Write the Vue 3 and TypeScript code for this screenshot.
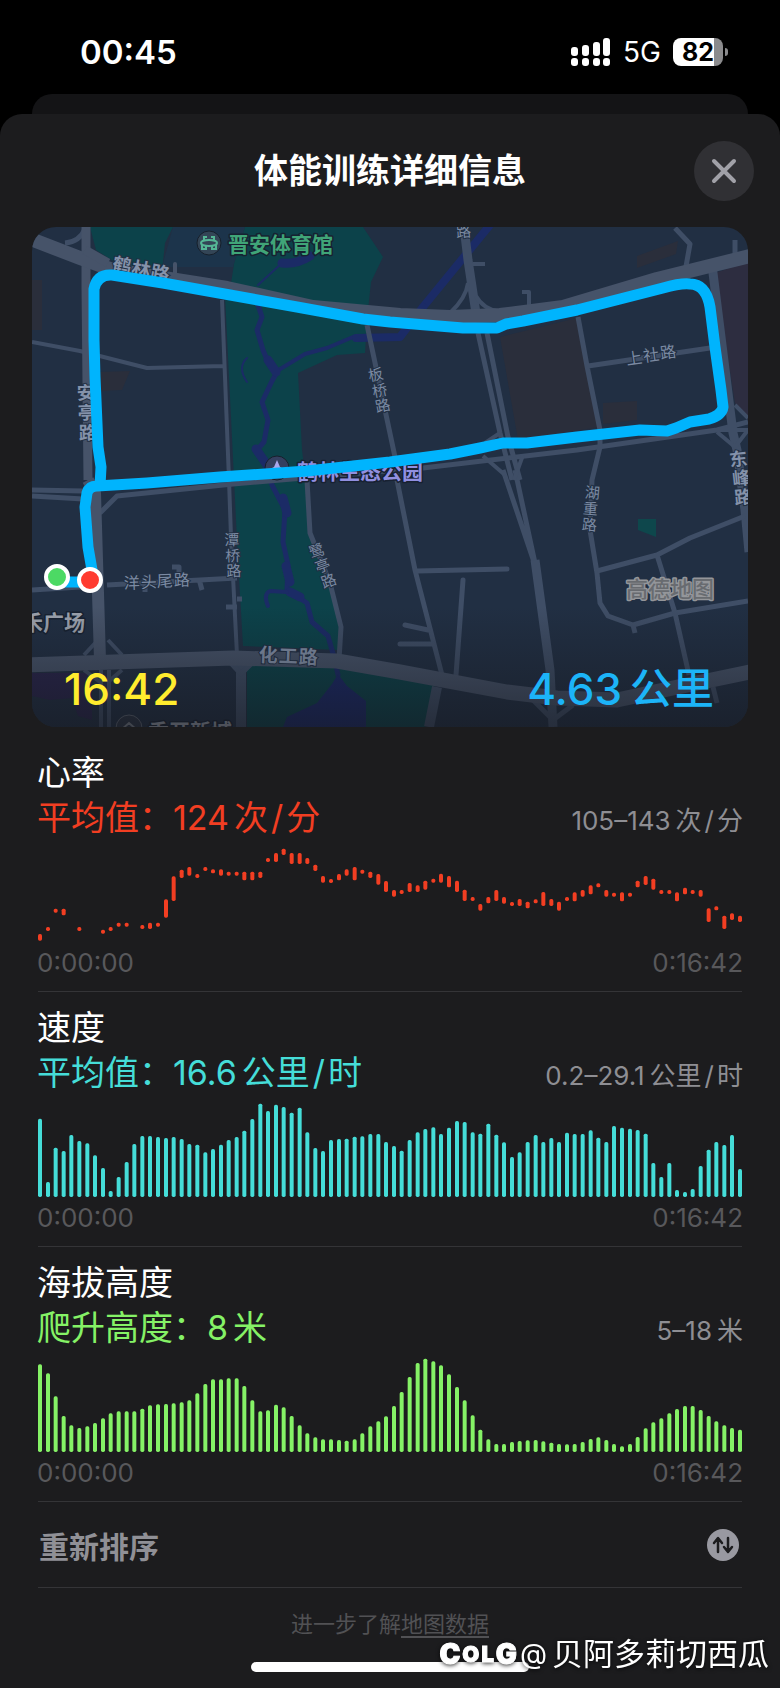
<script setup lang="ts">
interface Bar { x: number; y: number; h: number }
interface Metric {
  id: string
  title: string
  label: string
  value: string
  units: string[]
  range: string
  bars: Bar[]
}
interface RoadLabel { text: string; size: number; x: string; y: string; rotate: number; major?: boolean }

const CHART_W = 2112
const CHART_H = 294
const BAR_W = 12
const COUNT = 90

const barX = (i: number): number => Math.round((i * (CHART_W - BAR_W)) / (COUNT - 1))

// [index, top, bottom]; a missing bottom is a single reading
const heartReadings: number[][] = [
  [0, 267, 287], [1, 246], [2, 191], [3, 191, 211], [5, 246], [8, 254], [9, 246], [10, 233], [11, 233],
  [13, 240], [14, 233, 252], [15, 233], [16, 163, 218], [17, 94, 168], [18, 74, 99], [19, 66, 92], [20, 87],
  [21, 66], [22, 73], [23, 73, 92], [24, 80], [25, 80], [26, 80, 106], [27, 80, 106], [28, 80, 99], [29, 39],
  [30, 24, 51], [31, 11, 30], [32, 24, 57], [33, 24, 57], [34, 39, 57], [35, 59, 78], [36, 93, 113], [37, 102],
  [38, 87, 106], [39, 73, 92], [40, 66, 106], [41, 74], [42, 80, 99], [43, 87, 119], [44, 108, 141],
  [45, 135, 155], [46, 135], [47, 114, 141], [48, 121, 141], [49, 107, 134], [50, 101], [51, 86, 113],
  [52, 93, 127], [53, 107, 141], [54, 134, 168], [55, 156], [56, 177, 197], [57, 156, 175], [58, 135, 168],
  [59, 156, 176], [60, 171], [61, 162, 183], [62, 170, 190], [63, 163], [64, 141, 183], [65, 162, 183],
  [66, 170, 197], [67, 156], [68, 142, 169], [69, 135, 155], [70, 121, 148], [71, 115], [72, 135, 155],
  [73, 143], [74, 142, 169], [75, 143], [76, 107, 127], [77, 93, 120], [78, 101, 134], [79, 135], [80, 135],
  [81, 142, 169], [82, 128, 148], [83, 135], [84, 135, 155], [85, 190, 231], [86, 184], [87, 212, 252],
  [88, 205, 225], [89, 212, 231],
]

const speedTops: number[] = [
  56, 246, 143, 153, 105, 123, 130, 166, 204, 273, 231, 186, 132, 108, 108, 111, 114, 111, 117, 132, 134, 157,
  147, 134, 120, 111, 92, 57, 11, 33, 14, 21, 38, 23, 97, 144, 153, 120, 117, 116, 110, 109, 102, 102, 126, 138,
  152, 120, 97, 87, 82, 102, 83, 63, 66, 97, 101, 71, 104, 127, 171, 157, 126, 105, 126, 114, 126, 98, 102, 102,
  91, 113, 126, 78, 83, 86, 90, 101, 189, 231, 189, 270, 276, 267, 198, 149, 126, 135, 105, 207,
]

const altitudeTops: number[] = [
  28, 55, 124, 183, 211, 219, 214, 204, 190, 175, 169, 169, 169, 161, 151, 148, 147, 145, 142, 136, 115, 87, 73,
  73, 70, 70, 93, 136, 169, 166, 149, 157, 183, 211, 235, 247, 253, 253, 255, 257, 253, 235, 214, 199, 184, 153,
  111, 66, 24, 11, 19, 31, 58, 96, 136, 181, 224, 253, 267, 267, 261, 258, 256, 255, 259, 263, 267, 268, 267,
  261, 252, 247, 255, 267, 274, 267, 246, 220, 202, 190, 175, 162, 153, 153, 165, 183, 199, 211, 219, 224,
]

const fromTops = (tops: number[]): Bar[] =>
  tops.map((top, i) => ({ x: barX(i), y: top, h: CHART_H - 3 - top }))

const metrics: Metric[] = [
  {
    id: 'heart', title: '心率', label: '平均值：', value: '124', units: ['次', '分'], range: '105–143',
    bars: heartReadings.map(([i, top, bottom]) => ({ x: barX(i), y: top, h: (bottom ?? top + BAR_W) - top })),
  },
  {
    id: 'speed', title: '速度', label: '平均值：', value: '16.6', units: ['公里', '时'], range: '0.2–29.1',
    bars: fromTops(speedTops),
  },
  {
    id: 'altitude', title: '海拔高度', label: '爬升高度：', value: '8', units: ['米'], range: '5–18',
    bars: fromTops(altitudeTops),
  },
]

const roadLabels: RoadLabel[] = [
  { text: '鹤林路', size: 19, x: '121 140 159', y: '264 268 272', rotate: 10, major: true },
  { text: '安亭路', size: 18, x: '86 87 88', y: '393 413 433', rotate: -2, major: true },
  { text: '板桥路', size: 15, x: '377 381 384', y: '376 392 407', rotate: -12 },
  { text: '潭桥路', size: 15, x: '232 233 234', y: '540 556 571', rotate: -2 },
  { text: '鹭亭路', size: 15, x: '319 325 331', y: '553 568 583', rotate: -20 },
  { text: '湖重路', size: 15, x: '592 590 589', y: '492 508 524', rotate: 5 },
  { text: '洋头尾路', size: 16, x: '132 149 165 182', y: '583 582 581 580', rotate: -2 },
  { text: '上社路', size: 16, x: '635 652 669', y: '359 356 353', rotate: -8 },
  { text: '化工路', size: 19, x: '268 288 308', y: '655 656 657', rotate: 2, major: true },
  { text: '东峰路', size: 18, x: '739 742 744', y: '460 479 498', rotate: -6, major: true },
  { text: '路', size: 15, x: '464', y: '232', rotate: -4 },
]
</script>

<template>
  <div class="screen">
    <header class="status">
      <time class="clock">00:45</time>
      <div class="indicators">
        <svg class="signal" width="40" height="28" viewBox="0 0 40 28" aria-label="信号">
          <g fill="#fff">
            <rect x="0" y="9" width="7" height="9" rx="3" /><rect x="11" y="7" width="7" height="11" rx="3" />
            <rect x="22" y="4" width="7" height="14" rx="3" /><rect x="32" y="0" width="7" height="18" rx="3" />
            <rect x="0" y="20" width="7" height="8" rx="3" /><rect x="11" y="20" width="7" height="8" rx="3" />
            <rect x="22" y="20" width="7" height="8" rx="3" /><rect x="32" y="20" width="7" height="8" rx="3" />
          </g>
        </svg>
        <span class="network">5G</span>
        <span class="battery"><span class="level">82</span></span>
      </div>
    </header>

    <div class="back-sheet"></div>

    <main class="sheet">
      <div class="title-bar">
        <h1>体能训练详细信息</h1>
        <button class="close" type="button" aria-label="关闭">
          <svg width="26" height="26" viewBox="0 0 26 26">
            <path d="M3 3 23 23M23 3 3 23" fill="none" stroke="#a1a1a8" stroke-width="4" stroke-linecap="round" />
          </svg>
        </button>
      </div>

      <section class="map" aria-label="路线">
        <svg class="map-canvas" viewBox="32 227 716 500">
          <defs>
            <linearGradient id="shade" x1="0" y1="0" x2="0" y2="1">
              <stop offset="0" stop-color="#16181f" stop-opacity="0" />
              <stop offset="1" stop-color="#16181f" stop-opacity="0.6" />
            </linearGradient>
          </defs>
          <rect x="32" y="227" width="716" height="500" fill="#212f43" />

          <g fill="#2a2e3b">
            <path d="M500 337 577 318 600 427 518 440Z" />
            <path d="M715 273 748 262V420L735 403Z" fill="#2d2d40" />
            <path d="M637 256 678 241 676 254 637 268ZM603 403 637 401V420L603 424ZM100 372 130 371 122 390 100 391Z" />
            <path d="M32 280H42V330H32Z" />
            <path d="M32 673H92V720L78 716 72 698 50 700 32 696Z" fill="#29254c" />
          </g>
          <path d="M173 227H245L233 267H162Z" fill="#1c344b" />
          <g fill="#0c424a">
            <path d="M90 227H173L165 243 162 272 115 262 96 250Z" />
            <path d="M245 227H363L383 257 371 282 368 310 300 305 230 290 234 264Z" />
            <path d="M225 295 300 305 367 320 365 353 337 355 298 373 302 450 306 482 311 536 334 593 341 627 338 650 243 646 238 560Z" />
            <path d="M247 664H340L435 685 425 727H247Z" />
            <path d="M638 519H656V537L638 530Z" fill="#0e474c" />
          </g>

          <g fill="none" stroke="#1b2b66" stroke-linecap="round" stroke-linejoin="round">
            <path d="M353 337 327 348 305 354 277 371" stroke-width="4" />
            <path d="M490 225 423 307" stroke-width="8" />
            <path d="M423 307 400 337 356 338" stroke-width="8" />
            <path d="M258 285 282 263" stroke-width="2" />
            <path d="M282 263Q296 265 310 256" stroke-width="9" />
            <path d="M258 305 262 317 257 330 263 350 268 362 277 372 272 381 262 402 268 420 264 442 257 450 266 468 272 485 285 510 283 542 288 565 287 590 307 603 312 622 328 636 334 657 338 675" stroke-width="5" />
            <path d="M268 360 276 372M283 498 287 513M286 566 290 582M256 449 265 462M290 592 300 597" stroke-width="9" />
            <path d="M287 592 270 591Q263 594 268 606" stroke-width="4" />
            <path d="M247 358Q237 367 247 382" stroke-width="2" />
          </g>
          <path d="M338 674 347 686 366 701V727H283L287 717 317 703 332 684Z" fill="#1a2867" />

          <g fill="none" stroke="#3f4e66" stroke-linejoin="round">
            <path d="M32 342 80 351 147 368 223 366M222 300 229 480 231 537 237 655" stroke-width="4" />
            <path d="M65 243Q80 242 86 227" stroke-width="5" />
            <path d="M32 490 83 491M32 496 83 499M100 513 117 496 233 484 423 468 577 450 717 430 748 422" stroke-width="5" />
            <path d="M32 590 80 587M107 585 237 578M172 567 179 567V577M199 579 202 590M145 585V592M226 607H237M237 599H242" stroke-width="5" />
            <path d="M367 325 395 457 397 480 415 570 442 675M307 480 310 533 330 583 341 627 339 660" stroke-width="5" />
            <path d="M478 333 500 433 512 480M487 333 508 437 520 480M503 470 534 562M515 470 535 563" stroke-width="5" />
            <path d="M535 560 550 670 553 727" stroke-width="9" />
            <path d="M464 227 468 260 477 320" stroke-width="9" />
            <path d="M468 283Q466 298 450 313M476 296Q483 309 500 312M473 264H485M522 292H529V309" stroke-width="4" />
            <path d="M500 433 485 443M483 456 505 475M523 455 514 480" stroke-width="4" />
            <path d="M675 228 690 244 685 272M735 240V260" stroke-width="5" />
            <path d="M712 265 733 433 737 450 745 510 749 552" stroke-width="9" />
            <path d="M735 405 748 418M717 432 735 447 748 430M720 430H748" stroke-width="4" />
            <path d="M578 317 587 366 600 430V447L592 480 590 530 597 573 600 603 608 616 633 625 675 613 748 601M633 625 635 633M588 366 710 348" stroke-width="5" />
            <path d="M597 571 657 555 690 538 745 516M657 555 675 613 689 675M713 687 717 703" stroke-width="5" />
            <path d="M417 571 507 569M463 580 456 675M405 625 428 630M400 644H433" stroke-width="5" stroke-linecap="round" />
            <path d="M437 687 429 727M241 665V727" stroke-width="10" />
            <path d="M230 662 241 674 253 662M533 700 553 720 573 705" stroke-width="5" />
            <path d="M84 655 98 640M108 640 122 655M84 670 100 682M122 670 108 682M101 670V727M109 670V727" stroke-width="4" />
          </g>
          <g fill="none" stroke="#465369" stroke-linejoin="round">
            <path d="M86 227 86 287 88 480" stroke-width="9" />
            <path d="M88 480 95 493 100 660" stroke-width="12" />
            <path d="M28 238 80 258 113 270 227 288 313 307 400 315 450 317 500 315 563 307 657 279 750 256" stroke-width="14" />
            <path d="M85 250 108 263" stroke-width="9" />
            <path d="M175 264V280" stroke-width="4" stroke-linecap="round" />
            <path d="M28 665 233 658 337 661 400 672 507 692 557 698 617 700 673 688 750 672" stroke-width="15" />
          </g>

          <circle cx="209" cy="243" r="12" fill="#334556" stroke="#17202c" />
          <g fill="none" stroke="#54b695" stroke-width="2">
            <ellipse cx="209" cy="243" rx="8" ry="3" />
            <path d="M202 244V249H206V246M216 244V249H212V246M204 240V237H207M214 240V237H211" />
          </g>
          <text class="poi stadium" x="228" y="252" font-size="21">晋安体育馆</text>
          <circle cx="277" cy="468" r="12" fill="#343f5f" stroke="#17202c" />
          <path d="M277 460 280 467 286 470 280 472 277 478 274 472 268 470 274 467Z" fill="#a8a7ec" />
          <text class="poi park" x="297" y="479" font-size="21">鹤林生态公园</text>
          <text class="poi plaza" x="22" y="630" font-size="21">禾广场</text>
          <circle cx="129" cy="728" r="13" fill="#2b3444" stroke="#606875" />
          <path d="M121 730 129 723 137 730M124 729V738H134V729" fill="none" stroke="#7d838d" stroke-width="2" />
          <text class="poi plaza" x="148" y="739" font-size="21">香开新城</text>
          <text
            v-for="road in roadLabels"
            :key="road.text + road.x"
            class="road"
            :class="{ major: road.major }"
            :font-size="road.size"
            :x="road.x"
            :y="road.y"
            :rotate="road.rotate"
            dominant-baseline="central"
            text-anchor="middle"
          >{{ road.text }}</text>
          <text class="provider" x="626" y="597" font-size="22">高德地图</text>

          <rect x="32" y="607" width="716" height="120" fill="url(#shade)" />

          <path
            d="M57 582H90L92 570 88 547 85 507 87 493Q89 486 97 486L147 483 220 477 307 471 390 462 450 454 480 448 503 443 527 443 577 437 640 430 667 431 676 428 690 422 709 419Q722 415 723 407L721 390 715 347 710 307Q706 284 690 284 681 283 663 288L577 310 523 321 506 324 497 328 463 328 390 322 363 319 297 307 163 283 112 275Q97 274 94 289L94 340 95 377 98 447 101 467 100 486"
            fill="none" stroke="#00b4fd" stroke-width="11" stroke-linejoin="round" stroke-linecap="round"
          />
          <circle cx="57" cy="577" r="11" fill="#4cd964" stroke="#fff" stroke-width="4" />
          <circle cx="90" cy="580" r="11" fill="#ff3b30" stroke="#fff" stroke-width="4" />
        </svg>
        <div class="map-stats">
          <span class="duration">16:42</span>
          <span class="distance"><span>4.63</span><span class="unit">公里</span></span>
        </div>
      </section>

      <section v-for="metric in metrics" :key="metric.id" class="metric" :class="metric.id">
        <h2>{{ metric.title }}</h2>
        <div class="summary">
          <p class="average">
            {{ metric.label }}<span class="number">{{ metric.value }}</span><template v-for="(unit, i) in metric.units" :key="unit"><span v-if="i" class="slash">/</span>{{ unit }}</template>
          </p>
          <p class="range">
            <span class="number">{{ metric.range }}</span><template v-for="(unit, i) in metric.units" :key="unit"><span v-if="i" class="slash">/</span>{{ unit }}</template>
          </p>
        </div>
        <svg class="chart" :viewBox="`0 0 ${CHART_W} ${CHART_H}`" role="img" :aria-label="metric.title">
          <rect v-for="bar in metric.bars" :key="bar.x" :x="bar.x" :y="bar.y" :width="BAR_W" :height="bar.h" rx="5" />
        </svg>
        <div class="times"><time>0:00:00</time><time>0:16:42</time></div>
      </section>

      <button class="reorder" type="button">
        <span>重新排序</span>
        <svg width="32" height="32" viewBox="0 0 32 32">
          <circle cx="16" cy="16" r="16" fill="#9999a1" />
          <path d="M11 23V10M7 14 11 9 15 14M21 9V22M17 18 21 23 25 18" fill="none" stroke="#1c1c1e" stroke-width="2.5" stroke-linecap="round" stroke-linejoin="round" />
        </svg>
      </button>

      <p class="more">进一步了解<a href="#">地图数据</a></p>
    </main>

    <div class="home-bar"></div>
    <div class="watermark">
      <span class="brand"><span>C</span><span class="small">O</span><span class="small">L</span><span>G</span></span>
      <span class="at">@</span><span>贝阿多莉切西瓜</span>
    </div>
  </div>
</template>

<style>
body {
  margin: 0;
  background: #000;
}
</style>

<style scoped>
.screen {
  position: relative;
  min-height: 100vh;
  display: flex;
  flex-direction: column;
  background: #000;
  color: #fff;
  font-family: Inter, "Noto Sans CJK SC", sans-serif;
  overflow: hidden;
}

h1, h2, p {
  margin: 0;
  font-weight: 400;
}

button {
  font: inherit;
  border: 0;
  padding: 0;
  cursor: pointer;
}

.status {
  height: 94px;
  box-sizing: border-box;
  padding: 10px 57px 0 80px;
  display: flex;
  justify-content: space-between;
  align-items: center;
}

.clock {
  font-size: 33px;
  line-height: 40px;
  font-weight: 600;
}

.indicators {
  display: flex;
  align-items: center;
  gap: 12px;
}

.network {
  font-size: 28px;
  line-height: 30px;
}

.battery {
  position: relative;
  width: 50px;
  height: 28px;
  border-radius: 8px;
  background: linear-gradient(to right, #fff 82%, #8b8b8d 82%);
  color: #000;
  text-align: center;
}

.battery::after {
  content: "";
  position: absolute;
  right: -5px;
  top: 10px;
  width: 3px;
  height: 8px;
  border-radius: 0 3px 3px 0;
  background: #8b8b8d;
}

.level {
  display: block;
  font-size: 25px;
  line-height: 28px;
  font-weight: 700;
}

.back-sheet {
  height: 40px;
  margin: 0 32px -20px;
  border-radius: 20px 20px 0 0;
  background: #141416;
}

.sheet {
  position: relative;
  flex: 1;
  border-radius: 22px 22px 0 0;
  background: #1c1c1e;
}

.title-bar {
  height: 113px;
  padding: 0 26px;
  display: grid;
  grid-template-columns: 60px 1fr 60px;
  align-items: center;
}

.title-bar h1 {
  grid-column: 2;
  text-align: center;
  font-size: 34px;
  line-height: 44px;
  font-weight: 600;
}

.close {
  width: 60px;
  height: 60px;
  border-radius: 50%;
  background: #303034;
  display: grid;
  place-items: center;
}

.map {
  position: relative;
  margin: 0 32px 10px;
  border-radius: 24px;
  overflow: hidden;
}

.map-canvas {
  display: block;
  width: 100%;
  height: auto;
}

.map-stats {
  position: absolute;
  left: 32px;
  right: 34px;
  bottom: 8px;
  display: flex;
  justify-content: space-between;
  align-items: baseline;
  font-size: 44px;
  line-height: 60px;
  font-weight: 500;
}

.duration {
  color: #ffec2e;
}

.distance {
  display: flex;
  gap: 8px;
  color: #1cb4f8;
}

.unit {
  font-size: 42px;
}

.poi {
  font-weight: 700;
  paint-order: stroke;
  stroke: #172131;
  stroke-width: 3px;
  stroke-linejoin: round;
}

.stadium {
  fill: #40a578;
}

.park {
  fill: #918fe0;
}

.plaza {
  fill: #9ca2ad;
}

.road {
  fill: #7b8aa2;
  paint-order: stroke;
  stroke: #212f43;
  stroke-width: 2px;
}

.major {
  fill: #8492aa;
  font-weight: 700;
}

.provider {
  font-weight: 500;
  fill: #686b70;
  stroke: #94969a;
  stroke-width: 3px;
  stroke-linejoin: round;
  paint-order: stroke;
}

.metric {
  margin: 0 38px;
  padding: 14px 0 12px;
  border-bottom: 1px solid #343437;
}

.metric h2,
.summary,
.times {
  margin: 0 -1px;
}

.metric h2 {
  font-size: 34px;
  line-height: 44px;
}

.summary {
  display: flex;
  justify-content: space-between;
  align-items: baseline;
  height: 44px;
  padding-top: 1px;
  white-space: nowrap;
}

.average {
  font-size: 34px;
  line-height: 44px;
}

.range {
  font-size: 26px;
  line-height: 44px;
  color: #8e8e93;
}

.number {
  margin-right: 5px;
}

.slash {
  margin: 0 3px;
}

.chart {
  display: block;
  width: 100%;
  height: auto;
  margin: 5px 0 4px;
  fill: currentColor;
}

.heart .average, .heart .chart {
  color: #f23e22;
}

.speed .average, .speed .chart {
  color: #45ddd8;
}

.altitude .average, .altitude .chart {
  color: #85f266;
}

.times {
  display: flex;
  justify-content: space-between;
  font-size: 26px;
  line-height: 32px;
  color: #58585b;
}

.reorder {
  width: calc(100% - 76px);
  height: 86px;
  margin: 0 38px;
  padding: 0 3px 0 1px;
  display: flex;
  justify-content: space-between;
  align-items: center;
  background: none;
  border-bottom: 1px solid #343437;
  color: #909096;
  font-size: 30px;
  font-weight: 600;
}

.more {
  padding: 20px 0 48px;
  text-align: center;
  font-size: 22px;
  line-height: 32px;
  color: #515154;
}

.more a {
  color: inherit;
  text-underline-offset: 4px;
}

.home-bar {
  position: absolute;
  left: 50%;
  bottom: 16px;
  width: 278px;
  height: 10px;
  margin-left: -139px;
  border-radius: 5px;
  background: #fff;
}

.watermark {
  position: absolute;
  right: 11px;
  bottom: 12px;
  display: flex;
  align-items: center;
  font-size: 31px;
  line-height: 44px;
  filter: drop-shadow(0 1px 2px rgba(0, 0, 0, 0.8));
  white-space: nowrap;
}

.brand {
  display: flex;
  align-items: center;
  gap: 2px;
  margin-right: 3px;
  font-size: 28px;
  font-weight: 900;
  -webkit-text-stroke: 1px #fff;
}

.small {
  font-size: 22px;
}

.at {
  font-size: 28px;
  margin-right: 5px;
}
</style>
